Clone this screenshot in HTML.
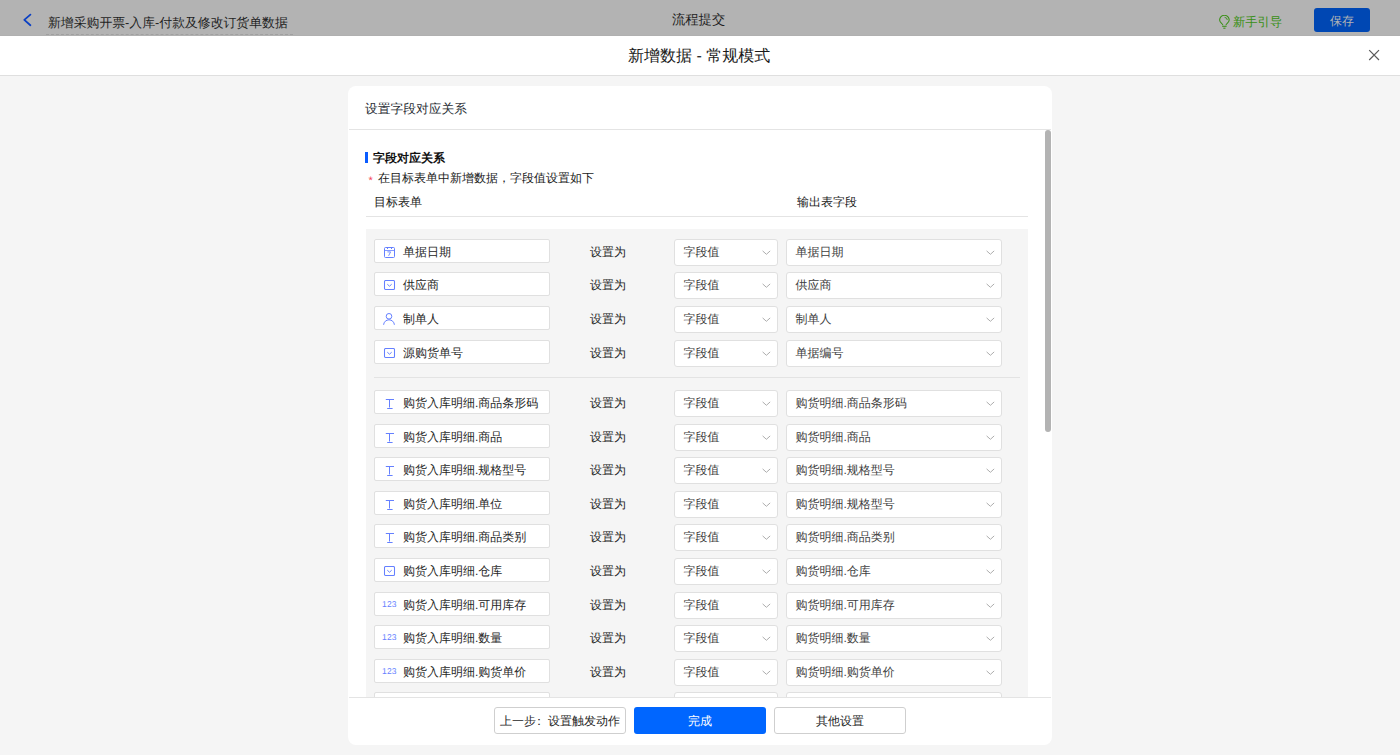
<!DOCTYPE html>
<html><head><meta charset="utf-8"><style>
*{box-sizing:border-box;margin:0;padding:0}
html,body{width:1400px;height:755px;overflow:hidden}
body{position:relative;background:#f5f5f5;font-family:'Liberation Sans',sans-serif;color:#222;text-rendering:geometricPrecision}
.abs{position:absolute;white-space:nowrap}
#topbar{position:absolute;left:0;top:0;width:1400px;height:36px;background:#b3b3b3;border-bottom:1px solid #b0b0b0}
#hdr{position:absolute;left:0;top:36px;width:1400px;height:40px;background:#fff;border-bottom:1px solid #dfdfdf}
#card{position:absolute;left:348px;top:86px;width:704px;height:659px;background:#fff;border-radius:8px;overflow:hidden}
#scroll{position:absolute;left:0;top:44px;width:704px;height:567px;overflow:hidden}
.lbox{position:absolute;left:26px;width:176px;height:24px;background:#fff;border:1px solid #e0e0e0;border-radius:2px}
.lt{position:absolute;left:28px;top:0;line-height:24px;font-size:12px;color:#262626;white-space:nowrap}
.setas{position:absolute;left:242px;width:40px;line-height:26px;font-size:12px;color:#262626;white-space:nowrap}
.sel{position:absolute;height:27px;background:#fff;border:1px solid #e0e0e0;border-radius:3px}
.s1{left:326px;width:104px}
.s2{left:438px;width:216px}
.st{position:absolute;left:8.5px;top:0;line-height:24px;font-size:12px;color:#404040;white-space:nowrap}
.btn{position:absolute;top:621px;height:27px;width:132px;border-radius:3px;font-size:12px;line-height:26px;text-align:center;white-space:nowrap}
</style></head><body>
<div id="topbar"></div>
<svg class="abs" style="left:22px;top:13px" width="11" height="14" viewBox="0 0 11 14"><path d="M8.4 1.6 L2.3 6.9 L8.4 12.2" fill="none" stroke="#0b40c4" stroke-width="1.8" stroke-linecap="round" stroke-linejoin="round"/></svg>
<div class="abs" style="left:46px;top:14px;font-size:12.85px;line-height:18px;color:#1f1f1f;border-bottom:1px dashed #a0a0a0;padding:0 5px 2px 2px">新增采购开票-入库-付款及修改订货单数据</div>
<div class="abs" style="left:672px;top:11px;font-size:13.3px;line-height:18px;color:#1f1f1f">流程提交</div>
<svg class="abs" style="left:1218.5px;top:15px" width="11" height="14" viewBox="0 0 11 14"><path d="M3.9 10.2 C3.7 8.7 0.6 7.7 0.6 5.1 A4.8 4.8 0 0 1 10.2 5.1 C10.2 7.7 7.1 8.7 6.9 10.2" fill="none" stroke="#388f14" stroke-width="1.05"/><line x1="3.2" y1="11.3" x2="7.6" y2="11.3" stroke="#388f14" stroke-width="1"/><line x1="4.3" y1="13.2" x2="6.5" y2="13.2" stroke="#388f14" stroke-width="1"/><path d="M5.6 2.4 A2.8 2.8 0 0 1 8.3 5" fill="none" stroke="#388f14" stroke-width="0.9"/></svg>
<div class="abs" style="left:1233px;top:13px;font-size:12.3px;line-height:18px;color:#388f14">新手引导</div>
<div class="abs" style="left:1314px;top:8px;width:56px;height:24px;background:#0047b3;border-radius:3px;color:#b3b3b3;font-size:12px;line-height:24px;padding-top:1px;text-align:center">保存</div>
<div id="hdr"></div>
<div class="abs" style="left:628px;top:47px;font-size:16px;line-height:20px;color:#1a1a1a">新增数据 - 常规模式</div>
<svg class="abs" style="left:1368px;top:49px" width="12" height="12" viewBox="0 0 12 12"><path d="M1.2 1.2 L11 11 M11 1.2 L1.2 11" stroke="#5a5a5a" stroke-width="1.2"/></svg>
<div id="card">
 <div class="abs" style="left:17px;top:14px;font-size:12.75px;line-height:18px;color:#2b2f36">设置字段对应关系</div>
 <div class="abs" style="left:1px;top:43px;width:702px;height:1px;background:#e4e4e4"></div>
 <div id="scroll">
  <div class="abs" style="left:17px;top:22px;width:3px;height:11px;background:#0a5cff"></div>
  <div class="abs" style="left:25px;top:20px;font-size:12px;line-height:16px;font-weight:bold;color:#111">字段对应关系</div>
  <div class="abs" style="left:20.5px;top:45px;font-size:11px;line-height:12px;color:#f5475a">*</div>
  <div class="abs" style="left:30px;top:40px;font-size:12px;line-height:16px;color:#1a1a1a">在目标表单中新增数据，字段值设置如下</div>
  <div class="abs" style="left:26px;top:64px;font-size:12px;line-height:16px;color:#1a1a1a">目标表单</div>
  <div class="abs" style="left:449px;top:64px;font-size:12px;line-height:16px;color:#1a1a1a">输出表字段</div>
  <div class="abs" style="left:18px;top:86px;width:662px;height:1px;background:#e4e4e4"></div>
  <div id="gbox" style="position:absolute;left:18px;top:99px;width:662px;height:600px;background:#f5f5f5"></div>
  <div style="position:absolute;left:0;top:-130px">
  <div class="lbox" style="top:239.00px"><svg width="13" height="12" viewBox="0 0 13 12" style="position:absolute;left:8px;top:7px"><rect x="1.5" y="0.5" width="10" height="10" rx="1" fill="none" stroke="#6580ff" stroke-width="1"/><line x1="1.5" y1="3.5" x2="11.5" y2="3.5" stroke="#6580ff" stroke-width="0.8"/><line x1="4.5" y1="0" x2="4.5" y2="2" stroke="#6580ff" stroke-width="1"/><line x1="8.5" y1="0" x2="8.5" y2="2" stroke="#6580ff" stroke-width="1"/><path d="M4.4 4.9 H7.6 L5.6 8.8" fill="none" stroke="#6580ff" stroke-width="0.9"/></svg><span class="lt">单据日期</span></div>
<div class="setas" style="top:239.00px">设置为</div>
<div class="sel s1" style="top:239.00px"><span class="st">字段值</span><svg width="9" height="6" viewBox="0 0 9 6" style="position:absolute;right:6px;top:9.6px"><path d="M0.6 0.9 L4.4 4.3 L8.2 0.9" fill="none" stroke="#adadad" stroke-width="1"/></svg></div>
<div class="sel s2" style="top:239.00px"><span class="st">单据日期</span><svg width="9" height="6" viewBox="0 0 9 6" style="position:absolute;right:6px;top:9.6px"><path d="M0.6 0.9 L4.4 4.3 L8.2 0.9" fill="none" stroke="#adadad" stroke-width="1"/></svg></div><div class="lbox" style="top:272.00px"><svg width="13" height="11" viewBox="0 0 13 11" style="position:absolute;left:8px;top:7px"><rect x="1.5" y="0.5" width="10" height="9" rx="1" fill="none" stroke="#6580ff" stroke-width="1.05"/><path d="M4.3 4.2 L6.5 6.2 L8.7 4.2" fill="none" stroke="#6580ff" stroke-width="1"/></svg><span class="lt">供应商</span></div>
<div class="setas" style="top:272.00px">设置为</div>
<div class="sel s1" style="top:272.00px"><span class="st">字段值</span><svg width="9" height="6" viewBox="0 0 9 6" style="position:absolute;right:6px;top:9.6px"><path d="M0.6 0.9 L4.4 4.3 L8.2 0.9" fill="none" stroke="#adadad" stroke-width="1"/></svg></div>
<div class="sel s2" style="top:272.00px"><span class="st">供应商</span><svg width="9" height="6" viewBox="0 0 9 6" style="position:absolute;right:6px;top:9.6px"><path d="M0.6 0.9 L4.4 4.3 L8.2 0.9" fill="none" stroke="#adadad" stroke-width="1"/></svg></div><div class="lbox" style="top:306.00px"><svg width="12" height="12" viewBox="0 0 12 12" style="position:absolute;left:8px;top:6px"><circle cx="6" cy="3.3" r="2.8" fill="none" stroke="#6580ff" stroke-width="1"/><path d="M0.6 11.8 C0.8 8.9 3.2 6.8 6 6.8 C8.8 6.8 11.2 8.9 11.4 11.8" fill="none" stroke="#6580ff" stroke-width="1"/></svg><span class="lt">制单人</span></div>
<div class="setas" style="top:306.00px">设置为</div>
<div class="sel s1" style="top:306.00px"><span class="st">字段值</span><svg width="9" height="6" viewBox="0 0 9 6" style="position:absolute;right:6px;top:9.6px"><path d="M0.6 0.9 L4.4 4.3 L8.2 0.9" fill="none" stroke="#adadad" stroke-width="1"/></svg></div>
<div class="sel s2" style="top:306.00px"><span class="st">制单人</span><svg width="9" height="6" viewBox="0 0 9 6" style="position:absolute;right:6px;top:9.6px"><path d="M0.6 0.9 L4.4 4.3 L8.2 0.9" fill="none" stroke="#adadad" stroke-width="1"/></svg></div><div class="lbox" style="top:340.00px"><svg width="13" height="11" viewBox="0 0 13 11" style="position:absolute;left:8px;top:7px"><rect x="1.5" y="0.5" width="10" height="9" rx="1" fill="none" stroke="#6580ff" stroke-width="1.05"/><path d="M4.3 4.2 L6.5 6.2 L8.7 4.2" fill="none" stroke="#6580ff" stroke-width="1"/></svg><span class="lt">源购货单号</span></div>
<div class="setas" style="top:340.00px">设置为</div>
<div class="sel s1" style="top:340.00px"><span class="st">字段值</span><svg width="9" height="6" viewBox="0 0 9 6" style="position:absolute;right:6px;top:9.6px"><path d="M0.6 0.9 L4.4 4.3 L8.2 0.9" fill="none" stroke="#adadad" stroke-width="1"/></svg></div>
<div class="sel s2" style="top:340.00px"><span class="st">单据编号</span><svg width="9" height="6" viewBox="0 0 9 6" style="position:absolute;right:6px;top:9.6px"><path d="M0.6 0.9 L4.4 4.3 L8.2 0.9" fill="none" stroke="#adadad" stroke-width="1"/></svg></div><div class="lbox" style="top:390.00px"><svg width="12" height="13" viewBox="0 0 12 13" style="position:absolute;left:9px;top:6px"><line x1="1.8" y1="2.5" x2="10" y2="2.5" stroke="#6580ff" stroke-width="1"/><line x1="5.5" y1="2.5" x2="5.5" y2="10.5" stroke="#6580ff" stroke-width="1"/><line x1="3.2" y1="11.5" x2="8.6" y2="11.5" stroke="#6580ff" stroke-width="1"/></svg><span class="lt">购货入库明细.商品条形码</span></div>
<div class="setas" style="top:390.00px">设置为</div>
<div class="sel s1" style="top:390.00px"><span class="st">字段值</span><svg width="9" height="6" viewBox="0 0 9 6" style="position:absolute;right:6px;top:9.6px"><path d="M0.6 0.9 L4.4 4.3 L8.2 0.9" fill="none" stroke="#adadad" stroke-width="1"/></svg></div>
<div class="sel s2" style="top:390.00px"><span class="st">购货明细.商品条形码</span><svg width="9" height="6" viewBox="0 0 9 6" style="position:absolute;right:6px;top:9.6px"><path d="M0.6 0.9 L4.4 4.3 L8.2 0.9" fill="none" stroke="#adadad" stroke-width="1"/></svg></div><div class="lbox" style="top:424.00px"><svg width="12" height="13" viewBox="0 0 12 13" style="position:absolute;left:9px;top:6px"><line x1="1.8" y1="2.5" x2="10" y2="2.5" stroke="#6580ff" stroke-width="1"/><line x1="5.5" y1="2.5" x2="5.5" y2="10.5" stroke="#6580ff" stroke-width="1"/><line x1="3.2" y1="11.5" x2="8.6" y2="11.5" stroke="#6580ff" stroke-width="1"/></svg><span class="lt">购货入库明细.商品</span></div>
<div class="setas" style="top:424.00px">设置为</div>
<div class="sel s1" style="top:424.00px"><span class="st">字段值</span><svg width="9" height="6" viewBox="0 0 9 6" style="position:absolute;right:6px;top:9.6px"><path d="M0.6 0.9 L4.4 4.3 L8.2 0.9" fill="none" stroke="#adadad" stroke-width="1"/></svg></div>
<div class="sel s2" style="top:424.00px"><span class="st">购货明细.商品</span><svg width="9" height="6" viewBox="0 0 9 6" style="position:absolute;right:6px;top:9.6px"><path d="M0.6 0.9 L4.4 4.3 L8.2 0.9" fill="none" stroke="#adadad" stroke-width="1"/></svg></div><div class="lbox" style="top:457.00px"><svg width="12" height="13" viewBox="0 0 12 13" style="position:absolute;left:9px;top:6px"><line x1="1.8" y1="2.5" x2="10" y2="2.5" stroke="#6580ff" stroke-width="1"/><line x1="5.5" y1="2.5" x2="5.5" y2="10.5" stroke="#6580ff" stroke-width="1"/><line x1="3.2" y1="11.5" x2="8.6" y2="11.5" stroke="#6580ff" stroke-width="1"/></svg><span class="lt">购货入库明细.规格型号</span></div>
<div class="setas" style="top:457.00px">设置为</div>
<div class="sel s1" style="top:457.00px"><span class="st">字段值</span><svg width="9" height="6" viewBox="0 0 9 6" style="position:absolute;right:6px;top:9.6px"><path d="M0.6 0.9 L4.4 4.3 L8.2 0.9" fill="none" stroke="#adadad" stroke-width="1"/></svg></div>
<div class="sel s2" style="top:457.00px"><span class="st">购货明细.规格型号</span><svg width="9" height="6" viewBox="0 0 9 6" style="position:absolute;right:6px;top:9.6px"><path d="M0.6 0.9 L4.4 4.3 L8.2 0.9" fill="none" stroke="#adadad" stroke-width="1"/></svg></div><div class="lbox" style="top:491.00px"><svg width="12" height="13" viewBox="0 0 12 13" style="position:absolute;left:9px;top:6px"><line x1="1.8" y1="2.5" x2="10" y2="2.5" stroke="#6580ff" stroke-width="1"/><line x1="5.5" y1="2.5" x2="5.5" y2="10.5" stroke="#6580ff" stroke-width="1"/><line x1="3.2" y1="11.5" x2="8.6" y2="11.5" stroke="#6580ff" stroke-width="1"/></svg><span class="lt">购货入库明细.单位</span></div>
<div class="setas" style="top:491.00px">设置为</div>
<div class="sel s1" style="top:491.00px"><span class="st">字段值</span><svg width="9" height="6" viewBox="0 0 9 6" style="position:absolute;right:6px;top:9.6px"><path d="M0.6 0.9 L4.4 4.3 L8.2 0.9" fill="none" stroke="#adadad" stroke-width="1"/></svg></div>
<div class="sel s2" style="top:491.00px"><span class="st">购货明细.规格型号</span><svg width="9" height="6" viewBox="0 0 9 6" style="position:absolute;right:6px;top:9.6px"><path d="M0.6 0.9 L4.4 4.3 L8.2 0.9" fill="none" stroke="#adadad" stroke-width="1"/></svg></div><div class="lbox" style="top:524.00px"><svg width="12" height="13" viewBox="0 0 12 13" style="position:absolute;left:9px;top:6px"><line x1="1.8" y1="2.5" x2="10" y2="2.5" stroke="#6580ff" stroke-width="1"/><line x1="5.5" y1="2.5" x2="5.5" y2="10.5" stroke="#6580ff" stroke-width="1"/><line x1="3.2" y1="11.5" x2="8.6" y2="11.5" stroke="#6580ff" stroke-width="1"/></svg><span class="lt">购货入库明细.商品类别</span></div>
<div class="setas" style="top:524.00px">设置为</div>
<div class="sel s1" style="top:524.00px"><span class="st">字段值</span><svg width="9" height="6" viewBox="0 0 9 6" style="position:absolute;right:6px;top:9.6px"><path d="M0.6 0.9 L4.4 4.3 L8.2 0.9" fill="none" stroke="#adadad" stroke-width="1"/></svg></div>
<div class="sel s2" style="top:524.00px"><span class="st">购货明细.商品类别</span><svg width="9" height="6" viewBox="0 0 9 6" style="position:absolute;right:6px;top:9.6px"><path d="M0.6 0.9 L4.4 4.3 L8.2 0.9" fill="none" stroke="#adadad" stroke-width="1"/></svg></div><div class="lbox" style="top:558.00px"><svg width="13" height="11" viewBox="0 0 13 11" style="position:absolute;left:8px;top:7px"><rect x="1.5" y="0.5" width="10" height="9" rx="1" fill="none" stroke="#6580ff" stroke-width="1.05"/><path d="M4.3 4.2 L6.5 6.2 L8.7 4.2" fill="none" stroke="#6580ff" stroke-width="1"/></svg><span class="lt">购货入库明细.仓库</span></div>
<div class="setas" style="top:558.00px">设置为</div>
<div class="sel s1" style="top:558.00px"><span class="st">字段值</span><svg width="9" height="6" viewBox="0 0 9 6" style="position:absolute;right:6px;top:9.6px"><path d="M0.6 0.9 L4.4 4.3 L8.2 0.9" fill="none" stroke="#adadad" stroke-width="1"/></svg></div>
<div class="sel s2" style="top:558.00px"><span class="st">购货明细.仓库</span><svg width="9" height="6" viewBox="0 0 9 6" style="position:absolute;right:6px;top:9.6px"><path d="M0.6 0.9 L4.4 4.3 L8.2 0.9" fill="none" stroke="#adadad" stroke-width="1"/></svg></div><div class="lbox" style="top:592.00px"><span style="position:absolute;left:7.1px;top:-0.9px;line-height:24px;font-size:8.5px;letter-spacing:0.1px;color:#6580ff;font-family:'Liberation Sans',sans-serif;">123</span><span class="lt">购货入库明细.可用库存</span></div>
<div class="setas" style="top:592.00px">设置为</div>
<div class="sel s1" style="top:592.00px"><span class="st">字段值</span><svg width="9" height="6" viewBox="0 0 9 6" style="position:absolute;right:6px;top:9.6px"><path d="M0.6 0.9 L4.4 4.3 L8.2 0.9" fill="none" stroke="#adadad" stroke-width="1"/></svg></div>
<div class="sel s2" style="top:592.00px"><span class="st">购货明细.可用库存</span><svg width="9" height="6" viewBox="0 0 9 6" style="position:absolute;right:6px;top:9.6px"><path d="M0.6 0.9 L4.4 4.3 L8.2 0.9" fill="none" stroke="#adadad" stroke-width="1"/></svg></div><div class="lbox" style="top:625.00px"><span style="position:absolute;left:7.1px;top:-0.9px;line-height:24px;font-size:8.5px;letter-spacing:0.1px;color:#6580ff;font-family:'Liberation Sans',sans-serif;">123</span><span class="lt">购货入库明细.数量</span></div>
<div class="setas" style="top:625.00px">设置为</div>
<div class="sel s1" style="top:625.00px"><span class="st">字段值</span><svg width="9" height="6" viewBox="0 0 9 6" style="position:absolute;right:6px;top:9.6px"><path d="M0.6 0.9 L4.4 4.3 L8.2 0.9" fill="none" stroke="#adadad" stroke-width="1"/></svg></div>
<div class="sel s2" style="top:625.00px"><span class="st">购货明细.数量</span><svg width="9" height="6" viewBox="0 0 9 6" style="position:absolute;right:6px;top:9.6px"><path d="M0.6 0.9 L4.4 4.3 L8.2 0.9" fill="none" stroke="#adadad" stroke-width="1"/></svg></div><div class="lbox" style="top:659.00px"><span style="position:absolute;left:7.1px;top:-0.9px;line-height:24px;font-size:8.5px;letter-spacing:0.1px;color:#6580ff;font-family:'Liberation Sans',sans-serif;">123</span><span class="lt">购货入库明细.购货单价</span></div>
<div class="setas" style="top:659.00px">设置为</div>
<div class="sel s1" style="top:659.00px"><span class="st">字段值</span><svg width="9" height="6" viewBox="0 0 9 6" style="position:absolute;right:6px;top:9.6px"><path d="M0.6 0.9 L4.4 4.3 L8.2 0.9" fill="none" stroke="#adadad" stroke-width="1"/></svg></div>
<div class="sel s2" style="top:659.00px"><span class="st">购货明细.购货单价</span><svg width="9" height="6" viewBox="0 0 9 6" style="position:absolute;right:6px;top:9.6px"><path d="M0.6 0.9 L4.4 4.3 L8.2 0.9" fill="none" stroke="#adadad" stroke-width="1"/></svg></div><div class="lbox" style="top:692.00px"><span style="position:absolute;left:7.1px;top:-0.9px;line-height:24px;font-size:8.5px;letter-spacing:0.1px;color:#6580ff;font-family:'Liberation Sans',sans-serif;">123</span><span class="lt"></span></div>
<div class="setas" style="top:692.00px">设置为</div>
<div class="sel s1" style="top:692.00px"><span class="st">字段值</span><svg width="9" height="6" viewBox="0 0 9 6" style="position:absolute;right:6px;top:9.6px"><path d="M0.6 0.9 L4.4 4.3 L8.2 0.9" fill="none" stroke="#adadad" stroke-width="1"/></svg></div>
<div class="sel s2" style="top:692.00px"><span class="st"></span><svg width="9" height="6" viewBox="0 0 9 6" style="position:absolute;right:6px;top:9.6px"><path d="M0.6 0.9 L4.4 4.3 L8.2 0.9" fill="none" stroke="#adadad" stroke-width="1"/></svg></div>
  <div class="abs" style="left:26px;top:377px;width:646px;height:1px;background:#e3e3e3"></div>
  </div>
  <div class="abs" style="left:697px;top:0;width:6px;height:302px;background:#b3b3b3;border-radius:3px"></div>
 </div>
 <div class="abs" style="left:1px;top:611px;width:702px;height:1px;background:#e4e4e4"></div>
 <div class="btn" style="left:146px;border:1px solid #cfcfcf;color:#262626;background:#fff">上一步<span style="position:relative;left:-3px">：</span>设置触发动作</div>
 <div class="btn" style="left:286px;background:#0066ff;color:#fff;line-height:28px">完成</div>
 <div class="btn" style="left:426px;border:1px solid #cfcfcf;color:#262626;background:#fff">其他设置</div>
</div>
</body></html>
